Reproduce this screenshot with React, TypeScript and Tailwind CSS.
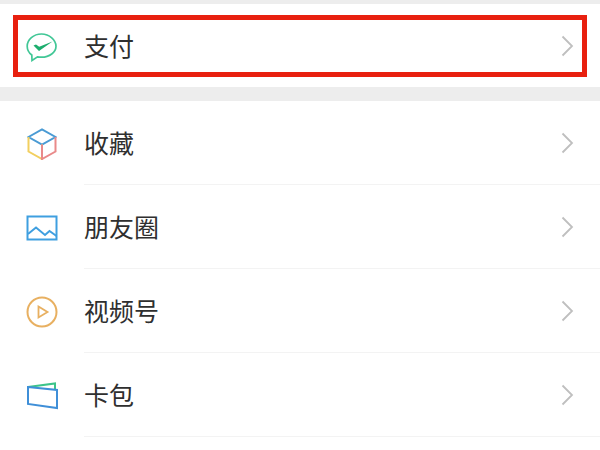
import type { ReactNode } from 'react';

const FONT = 'font-["Liberation_Sans","Noto_Sans_CJK_SC",sans-serif]';

function Chevron() {
  return (
    <svg width="14" height="22" viewBox="0 0 14 22" fill="none" className="shrink-0">
      <path d="M2.500 1.500 L12 11 L2.500 20.500" stroke="#bfbfbf" strokeWidth="1.800" />
    </svg>
  );
}

function PayIcon() {
  return (
    <svg width="32" height="30" viewBox="0 0 32 30" fill="none">
      <path
        d="M15.500 2C7.500 2 1.200 7.500 1.200 14.200c0 3.500 1.700 6.600 4.600 8.800L6 28.500l5.500-3.700c1.300.3 2.600.4 4 .4 8 0 14.500-5 14.500-11S23.500 2 15.500 2Z"
        stroke="#41c796"
        strokeWidth="1.700"
      />
      <path d="M7.500 13.500L10 12.500l3.200 2.200L26.500 9.500 13 19 7.500 13.500Z" fill="#1dae6e" />
    </svg>
  );
}

function BoxIcon() {
  return (
    <svg width="30" height="32" viewBox="0 0 30 32" fill="none" strokeWidth="2">
      <path d="M1.500 9L15 1.500 28.500 9 15 16.500 1.500 9Z" stroke="#4a9bd4" />
      <path d="M1.500 9v14.500L15 31V16.500" stroke="#f2cf5f" />
      <path d="M28.500 9v14.500L15 31V16.500" stroke="#e98a8a" />
    </svg>
  );
}

function PhotoIcon() {
  return (
    <svg width="32" height="26" viewBox="0 0 32 26" fill="none" stroke="#3f9fe0" strokeWidth="2">
      <rect x="1.500" y="1.500" width="29" height="23" />
      <path d="M2 19l8-6.500 9 7.500 4.500-4 7 5" />
    </svg>
  );
}

function PlayIcon() {
  return (
    <svg width="32" height="32" viewBox="0 0 32 32" fill="none" stroke="#e8b061" strokeWidth="2">
      <circle cx="16" cy="16" r="14.500" />
      <path d="M12.500 10.500L21.500 16l-9 5.500Z" strokeWidth="1.800" />
    </svg>
  );
}

function CardIcon() {
  return (
    <svg width="32" height="28" viewBox="0 0 32 28" fill="none" strokeWidth="2">
      <path d="M2 5L29 1.500V7" stroke="#3cc48a" />
      <path d="M2 5L31 8V26L2 22Z" stroke="#3f8fd8" />
    </svg>
  );
}

function Row({ icon, label }: { icon: ReactNode; label: string }) {
  return (
    <div className="flex h-[84px] items-center">
      <div className="flex w-[84px] shrink-0 justify-center pt-[2px]">{icon}</div>
      <div className="flex h-full flex-1 items-center justify-between border-b border-[#f3f3f3] pr-[26px]">
        <span className="pt-[5px] text-[25px] text-[#2f2f2f]">{label}</span>
        <Chevron />
      </div>
    </div>
  );
}

export default function App() {
  return (
    <div className={`h-[450px] w-[600px] overflow-hidden bg-white ${FONT}`}>
      <div className="h-[4px] bg-[#ededed]" />
      <div className="h-[83px] px-[13px] pt-[11px]">
        <div className="flex h-[62px] items-center border-[5px] border-[#e8200f] pr-[8px]">
          <div className="flex w-[48px] justify-center pt-[1px]">
            <PayIcon />
          </div>
          <span className="ml-[18px] flex-1 pt-[3px] text-[25px] text-[#2f2f2f]">支付</span>
          <Chevron />
        </div>
      </div>
      <div className="h-[14px] bg-[#ededed]" />
      <Row icon={<BoxIcon />} label="收藏" />
      <Row icon={<PhotoIcon />} label="朋友圈" />
      <Row icon={<PlayIcon />} label="视频号" />
      <Row icon={<CardIcon />} label="卡包" />
    </div>
  );
}
